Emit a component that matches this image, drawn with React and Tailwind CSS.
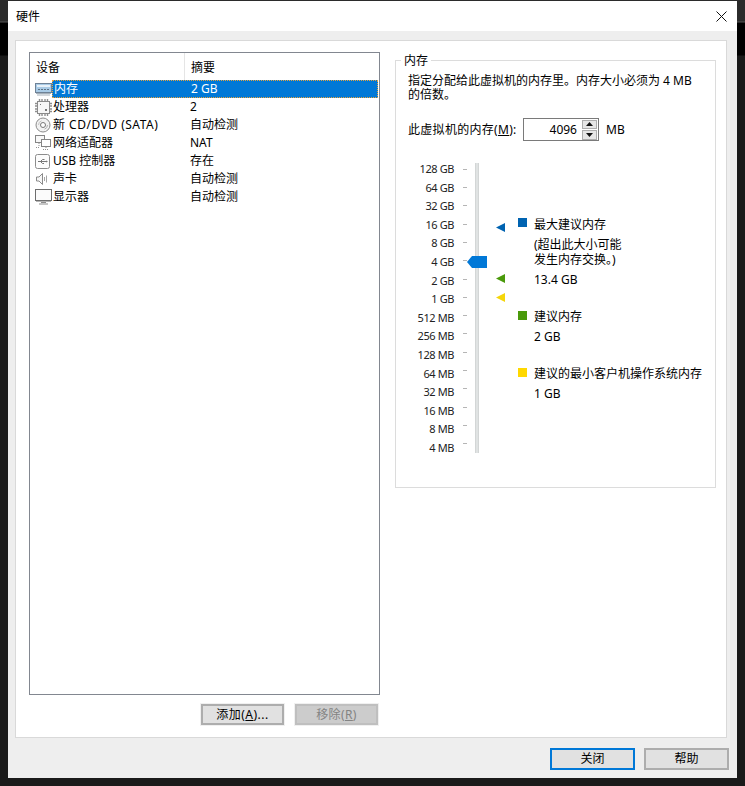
import React from 'react';

const FONT = '[font-family:"Noto_Sans","Noto_Sans_CJK_SC",sans-serif]';

const MemoryIcon = () => (
  <svg width="17" height="13" viewBox="0 0 17 13" fill="none">
    <rect x="0.5" y="0.5" width="16" height="9" fill="#a9cbe6" stroke="#6f8296" />
    <rect x="2" y="2" width="13" height="2" fill="#e8f2fa" />
    <path d="M3 6.5h2M6 6.5h2M9 6.5h2M12 6.5h2" stroke="#5d7286" />
    <path d="M1 10.5h15M2 12h13" stroke="#a5b0ba" />
  </svg>
);

const CpuIcon = () => (
  <svg width="17" height="17" viewBox="0 0 17 17" fill="none">
    <rect x="2.5" y="2.5" width="12" height="12" fill="#f7f7f7" stroke="#8a8a8a" />
    <path d="M4.5 0v2M7 0v2M10 0v2M12.5 0v2M4.5 15v2M7 15v2M10 15v2M12.5 15v2M0 4.5h2M0 7h2M0 10h2M0 12.5h2M15 4.5h2M15 7h2M15 10h2M15 12.5h2" stroke="#8f8f8f" strokeWidth="1.4" />
    <rect x="5" y="5" width="1" height="1" fill="#777" />
    <rect x="10" y="10" width="2" height="2" fill="#777" />
  </svg>
);

const DiscIcon = () => (
  <svg width="16" height="16" viewBox="0 0 16 16" fill="none">
    <circle cx="8" cy="8" r="7" fill="#f2f2f2" stroke="#8c8c8c" />
    <circle cx="8" cy="8" r="2.5" fill="#fff" stroke="#777" />
    <path d="M3.5 8a4.5 4.5 0 0 1 3-4.2" stroke="#c4c4c4" />
    <path d="M12.5 8a4.5 4.5 0 0 1-3 4.2" stroke="#b0b0b0" />
  </svg>
);

const NetworkIcon = () => (
  <svg width="17" height="16" viewBox="0 0 17 16" fill="none">
    <rect x="0.5" y="0.5" width="9" height="7" fill="#f8f8f8" stroke="#858585" />
    <rect x="6.5" y="4.5" width="9" height="7" fill="#fff" stroke="#858585" />
    <path d="M11 12v2M8 14.5h6M4 8v4M1 12.5h4" stroke="#8f8f8f" strokeDasharray="1 1" />
  </svg>
);

const UsbIcon = () => (
  <svg width="15" height="15" viewBox="0 0 15 15" fill="none">
    <rect x="0.5" y="0.5" width="14" height="14" rx="2" fill="#fcfcfc" stroke="#8c8c8c" />
    <path d="M3 7.5h8M5.5 7.5l2-2h2M5.5 7.5l2 2h1.5" stroke="#777" />
    <path d="M11 6.5l2 1-2 1z" fill="#777" />
  </svg>
);

const SoundIcon = () => (
  <svg width="14" height="14" viewBox="0 0 14 14" fill="none">
    <path d="M1.5 5h2.5l3.5-3.5v11L4 9H1.5z" fill="#f6f6f6" stroke="#8a8a8a" />
    <path d="M9.5 5v4M11.5 3.5v7" stroke="#a5a5a5" />
  </svg>
);

const DisplayIcon = () => (
  <svg width="17" height="16" viewBox="0 0 17 16" fill="none">
    <rect x="0.5" y="0.5" width="16" height="11" fill="#fbfbfb" stroke="#6e6e6e" />
    <path d="M1 12.5h15" stroke="#b5b5b5" />
    <path d="M6 13.5h5M4 15h9" stroke="#8d8d8d" />
  </svg>
);

const devices = [
  { name: '内存', summary: '2 GB', icon: <MemoryIcon />, selected: true },
  { name: '处理器', summary: '2', icon: <CpuIcon /> },
  { name: '新 CD/DVD (SATA)', summary: '自动检测', icon: <DiscIcon />, wide: true },
  { name: '网络适配器', summary: 'NAT', icon: <NetworkIcon /> },
  { name: 'USB 控制器', summary: '存在', icon: <UsbIcon /> },
  { name: '声卡', summary: '自动检测', icon: <SoundIcon /> },
  { name: '显示器', summary: '自动检测', icon: <DisplayIcon /> },
];

const scale = [
  '128 GB', '64 GB', '32 GB', '16 GB', '8 GB', '4 GB', '2 GB', '1 GB',
  '512 MB', '256 MB', '128 MB', '64 MB', '32 MB', '16 MB', '8 MB', '4 MB',
];

const DeviceList = () => (
  <div className="w-[351px] h-[643px] border border-[#828790] bg-white">
    <div className="flex h-[27px]">
      <div className="w-[155px] pl-[6px] pt-[7px] border-r border-[#e5e5e5]">设备</div>
      <div className="pl-[6px] pt-[7px]">摘要</div>
    </div>
    <div className="flex flex-col">
      {devices.map(d => (
        <div key={d.name} className="flex h-[18px] items-center">
          <div className="w-[22px] pl-[5px] shrink-0 flex items-center">{d.icon}</div>
          <div className={`flex flex-1 h-[18px] items-center ${d.selected ? 'bg-[#0078d7] text-white border border-dotted border-[#e8a33d]' : ''}`}>
            <div className={`w-[138px] pl-px shrink-0 whitespace-nowrap ${d.wide ? 'tracking-[0.5px]' : ''}`}>{d.name}</div>
            <div>{d.summary}</div>
          </div>
          <div className="w-px shrink-0" />
        </div>
      ))}
    </div>
  </div>
);

const Marker = ({ top, color }) => (
  <svg className="absolute left-[29px]" style={{ top }} width="9" height="9" viewBox="0 0 9 9">
    <path d="M0 4.5L9 0v9z" fill={color} />
  </svg>
);

const LegendSquare = ({ color }) => <div className={`w-[9px] h-[9px] mt-[2px] shrink-0 ${color}`} />;

const MemorySlider = () => (
  <div className="flex mt-[22px] ml-[12px] h-[290px]">
    <div className="w-[46px] flex flex-col items-end -mt-[3px]">
      {scale.map(s => (
        <div key={s} className="h-[18.6px] leading-[18.6px] text-[11px] tracking-[-0.4px] whitespace-nowrap text-[#222]">{s}</div>
      ))}
    </div>
    <div className="w-[13px] flex flex-col items-end -mt-[3px]">
      {scale.map(s => (
        <div key={s} className="h-[18.6px] flex items-center"><div className="w-[4px] h-px bg-[#b5b5b5]" /></div>
      ))}
    </div>
    <div className="relative w-[39px]">
      <div className="ml-[8px] w-[4px] h-[290px] bg-[#e0e3e3] border-x border-[#d3d6d6]" />
      <svg className="absolute left-0 top-[93px]" width="20" height="12" viewBox="0 0 20 12">
        <path d="M0 6L5 0h15v12H5z" fill="#0078d7" />
      </svg>
      <Marker top="60px" color="#0063b1" />
      <Marker top="111px" color="#4a9a0b" />
      <Marker top="130px" color="#f5d60a" />
    </div>
    <div className="flex flex-col pt-[53px] ml-[12px]">
      <div className="flex gap-[7px]">
        <LegendSquare color="bg-[#0063b1]" />
        <div>
          <div className="pt-px">最大建议内存</div>
          <div className="mt-[4px] leading-[15px]">(超出此大小可能<br />发生内存交换。)</div>
          <div className="mt-[5px]">13.4 GB</div>
        </div>
      </div>
      <div className="flex gap-[7px] mt-[21px]">
        <LegendSquare color="bg-[#4a9a0b]" />
        <div>
          <div>建议内存</div>
          <div className="mt-[4px]">2 GB</div>
        </div>
      </div>
      <div className="flex gap-[7px] mt-[21px]">
        <LegendSquare color="bg-[#ffd800]" />
        <div>
          <div className="whitespace-nowrap">建议的最小客户机操作系统内存</div>
          <div className="mt-[4px]">1 GB</div>
        </div>
      </div>
    </div>
  </div>
);

const MemoryGroup = () => (
  <div className="relative w-[321px] h-[428px] mt-[8px] border border-[#dcdcdc]">
    <div className="absolute left-[5px] top-[-9px] bg-white px-[3px] leading-[17px]">内存</div>
    <div className="pl-[12px] pt-[13px] leading-[14px]">
      <div>指定分配给此虚拟机的内存里。内存大小必须为 4 MB</div>
      <div>的倍数。</div>
    </div>
    <div className="flex items-center pl-[12px] mt-[16px]">
      <div className="w-[115px] whitespace-nowrap tracking-[0.3px]">此虚拟机的内存(<span className="underline">M</span>):</div>
      <div className="flex items-center justify-between w-[76px] h-[23px] border border-[#7a7a7a] pl-[2px] pr-px">
        <div className="flex-1 text-right pr-[5px]">4096</div>
        <div className="flex flex-col gap-px">
          <div className="w-[15px] h-[9.5px] bg-[#e6e6e6] border border-[#adadad] flex items-center justify-center">
            <svg width="7" height="4" viewBox="0 0 7 4"><path d="M3.5 0L7 4H0z" fill="#111" /></svg>
          </div>
          <div className="w-[15px] h-[9.5px] bg-[#e6e6e6] border border-[#adadad] flex items-center justify-center">
            <svg width="7" height="4" viewBox="0 0 7 4"><path d="M0 0h7L3.5 4z" fill="#111" /></svg>
          </div>
        </div>
      </div>
      <div className="ml-[7px]">MB</div>
    </div>
    <MemorySlider />
  </div>
);

const Button = ({ children, className = '' }) => (
  <div className={`flex items-center justify-center border-2 ${className}`}>{children}</div>
);

const App = () => (
  <div className={`w-[745px] h-[786px] bg-[linear-gradient(#2b2b2b_0,#2b2b2b_21px,#555_22px,#000_23px,#000_55px,#1a1a1a_56px)] pl-[8px] pt-px overflow-hidden text-[12px] leading-[16px] text-black ${FONT}`}>
    <div className="w-[729px] h-[777px] bg-[#eeeeee] flex flex-col">
      <div className="h-[30px] bg-white flex items-center justify-between pl-[8px] pr-[10px] shrink-0">
        <div className="text-[12px] pt-px">硬件</div>
        <svg width="11" height="11" viewBox="0 0 11 11"><path d="M0.5 0.5l10 10M10.5 0.5l-10 10" stroke="#111" strokeWidth="1" /></svg>
      </div>
      <div className="ml-[7px] mt-[9px] w-[712px] h-[698px] bg-white border border-[#d9d9d9] pl-[13px] pt-[11px] flex gap-[15px] shrink-0">
        <div className="flex flex-col">
          <DeviceList />
          <div className="flex justify-end gap-[11px] mt-[9px] pr-[2px]">
            <Button className="w-[83px] h-[21px] tracking-[0.5px] bg-[#e1e1e1] border-[#adadad] shadow-[0_0_0_1px_#f0f0f0]">添加(<span className="underline">A</span>)...</Button>
            <Button className="w-[83px] h-[21px] tracking-[0.4px] bg-[#cccccc] border-[#bfbfbf] text-[#838383] shadow-[0_0_0_1px_#f0f0f0]">移除(<span className="underline">R</span>)</Button>
          </div>
        </div>
        <MemoryGroup />
      </div>
      <div className="flex justify-end gap-[9px] mt-[10px] pr-[8px]">
        <Button className="w-[85px] h-[22px] bg-[#e1e1e1] border-[#0078d7]">关闭</Button>
        <Button className="w-[85px] h-[22px] bg-[#e1e1e1] border-[#adadad]">帮助</Button>
      </div>
    </div>
  </div>
);

export default App;
